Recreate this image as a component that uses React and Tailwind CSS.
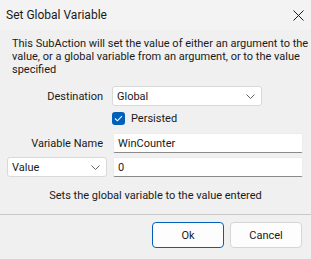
import React from 'react'

const Chevron = () => (
  <svg width="9" height="5" viewBox="0 0 9 5" className="text-[#606060]">
    <path d="M0.5 0.5 L4.5 4.5 L8.5 0.5" fill="none" stroke="currentColor" strokeWidth="1" />
  </svg>
)

const ComboBox = ({ value, className }) => (
  <div className={`h-[20px] bg-white border border-[#d9d9d9] rounded-[3px] flex items-center justify-between pl-[4px] pr-[6px] ${className}`}>
    <span>{value}</span>
    <Chevron />
  </div>
)

const TextBox = ({ value, className }) => (
  <div className={`h-[20px] bg-white border border-[#ececec] border-b-[#8a8a8a] rounded-[2px] flex items-center pl-[4px] ${className}`}>
    {value}
  </div>
)

export default function App() {
  return (
    <div className="w-[311px] h-[259px] bg-[#f0f0f0] text-[11px] leading-[13px] text-[#1a1a1a] flex flex-col overflow-hidden" style={{ fontFamily: 'Roboto, "Liberation Sans", sans-serif' }}>
      {/* title bar */}
      <div className="h-[30px] bg-[#f3f3f3] flex items-center justify-between pl-[6px] pr-[7px]">
        <span className="text-[12px]">Set Global Variable</span>
        <svg width="11" height="11" viewBox="0 0 11 11">
          <path d="M0.5 0.5 L10.5 10.5 M10.5 0.5 L0.5 10.5" stroke="#1a1a1a" strokeWidth="1" />
        </svg>
      </div>

      {/* body */}
      <div className="flex flex-col">
        <p className="mt-[7px] px-[12px] whitespace-nowrap">
          This SubAction will set the value of either an argument to the<br />
          value, or a global variable from an argument, or to the value<br />
          specified
        </p>

        <div className="mt-[10px] flex items-center">
          <span className="w-[104px] text-right pr-[1px]">Destination</span>
          <ComboBox value="Global" className="ml-[8px] w-[150px]" />
        </div>

        <div className="mt-[6px] ml-[112px] flex items-center gap-[6px] h-[13px]">
          <span className="w-[13px] h-[13px] rounded-[3px] bg-[#005fb8] flex items-center justify-center">
            <svg width="9" height="7" viewBox="0 0 9 7">
              <path d="M1 3.5 L3.4 5.8 L8 1.2" fill="none" stroke="white" strokeWidth="1.1" />
            </svg>
          </span>
          <span>Persisted</span>
        </div>

        <div className="mt-[8px] flex items-center">
          <span className="w-[104px] text-right pr-[1px]">Variable Name</span>
          <TextBox value="WinCounter" className="ml-[9px] w-[190px]" />
        </div>

        <div className="mt-[4px] flex items-center">
          <ComboBox value="Value" className="ml-[7px] w-[100px]" />
          <TextBox value="0" className="ml-[6px] w-[190px]" />
        </div>

        <p className="mt-[12px] text-center">Sets the global variable to the value entered</p>

        <div className="mt-[12px] h-px bg-[#c8c8c8]" />

        <div className="mt-[7px] flex justify-end gap-[6px] pr-[9px]">
          <button className="w-[72px] h-[26px] bg-[#fdfdfd] border border-[#005fb8] rounded-[4px]">Ok</button>
          <button className="w-[72px] h-[26px] bg-[#fdfdfd] border border-[#d5d5d5] rounded-[4px]">Cancel</button>
        </div>
      </div>
    </div>
  )
}
